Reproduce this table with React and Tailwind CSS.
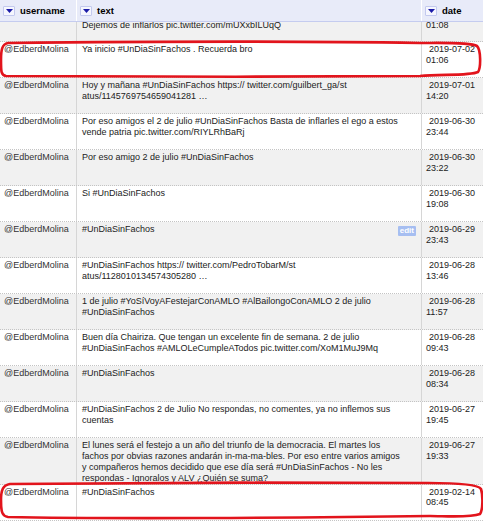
import React from "react";

const rows = [
  { lines: ["Dejemos de inflarlos pic.twitter.com/mUXxbILUqQ"], time: "01:08", partial: true },
  { lines: ["Ya inicio #UnDiaSinFachos . Recuerda bro"], date: "2019-07-02", time: "01:06" },
  {
    lines: ["Hoy y mañana #UnDiaSinFachos https:// twitter.com/guilbert_ga/st", "atus/1145769754659041281 …"],
    date: "2019-07-01",
    time: "14:20",
  },
  {
    lines: [
      "Por eso amigos el 2 de julio #UnDiaSinFachos Basta de inflarles el ego a estos",
      "vende patria pic.twitter.com/RIYLRhBaRj",
    ],
    date: "2019-06-30",
    time: "23:44",
  },
  { lines: ["Por eso amigo 2 de julio #UnDiaSinFachos"], date: "2019-06-30", time: "23:22" },
  { lines: ["Si #UnDiaSinFachos"], date: "2019-06-30", time: "19:08" },
  { lines: ["#UnDiaSinFachos"], date: "2019-06-29", time: "23:43", edit: true },
  {
    lines: ["#UnDiaSinFachos https:// twitter.com/PedroTobarM/st", "atus/1128010134574305280 …"],
    date: "2019-06-28",
    time: "13:46",
  },
  {
    lines: ["1 de julio #YoSíVoyAFestejarConAMLO #AlBailongoConAMLO 2 de julio", "#UnDiaSinFachos"],
    date: "2019-06-28",
    time: "11:57",
  },
  {
    lines: [
      "Buen día Chairiza. Que tengan un excelente fin de semana. 2 de julio",
      "#UnDiaSinFachos #AMLOLeCumpleATodos pic.twitter.com/XoM1MuJ9Mq",
    ],
    date: "2019-06-28",
    time: "09:43",
  },
  { lines: ["#UnDiaSinFachos"], date: "2019-06-28", time: "08:34" },
  {
    lines: ["#UnDiaSinFachos 2 de Julio No respondas, no comentes, ya no inflemos sus", "cuentas"],
    date: "2019-06-27",
    time: "19:45",
  },
  {
    lines: [
      "El lunes será el festejo a un año del triunfo de la democracia. El martes los",
      "fachos por obvias razones andarán in-ma-ma-bles. Por eso entre varios amigos",
      "y compañeros hemos decidido que ese día será #UnDiaSinFachos - No les",
      "respondas - Ignoralos y ALV ¿Quién se suma?",
    ],
    date: "2019-06-27",
    time: "19:33",
  },
  { lines: ["#UnDiaSinFachos"], date: "2019-02-14", time: "08:45" },
];

function SortIcon() {
  return (
    <span className="flex h-[10px] w-[12px] items-center justify-center rounded-[1px] border border-[#c3c9ee] bg-[#f5f6fe]">
      <svg width="7" height="4" viewBox="0 0 7 4">
        <path d="M0 0 L7 0 L3.5 4 Z" fill="#1b1ba8" />
      </svg>
    </span>
  );
}

function HeaderCell({ label, last }) {
  return (
    <div className={`flex items-center gap-[5px] pl-[3px] ${last ? "" : "border-r border-white"}`}>
      <SortIcon />
      <span className="text-[9.5px] font-bold leading-[12px] text-black">{label}</span>
    </div>
  );
}

function Row({ row, idx }) {
  const gray = idx % 2 === 0;
  const pad = row.partial ? "mt-[-2.2px]" : "pt-[2px]";
  return (
    <div
      className={`grid grid-cols-[77px_345px_61px] overflow-hidden border-b border-dotted border-[#c4c4c4] ${
        gray ? "bg-[#f1f1f1]" : "bg-white"
      } ${row.partial ? "h-[20.4px]" : "min-h-[36px]"}`}
    >
      <div className={`border-r border-[#d6d6d6] pl-[4px] text-[#333] ${pad}`}>
        {row.partial ? "" : "@EdberdMolina"}
      </div>
      <div className={`relative border-r border-[#d6d6d6] pl-[5px] ${pad}`}>
        {row.lines.map((line, i) => (
          <div key={i} className="whitespace-nowrap">
            {line}
          </div>
        ))}
        {row.edit ? (
          <span className="absolute right-[5px] top-[4px] rounded-[1px] bg-[#a6bef1] px-[2px] text-[8px] font-bold leading-[10px] text-white">
            edit
          </span>
        ) : null}
      </div>
      <div className={`pl-[4px] ${pad}`}>
        {row.date ? <div className="pl-[3px]">{row.date}</div> : null}
        <div>{row.time}</div>
      </div>
    </div>
  );
}

export default function App() {
  return (
    <div className="relative h-[521px] w-[483px] overflow-hidden bg-white font-['Liberation_Sans',Arial,sans-serif] text-[9px] leading-[10.8px] text-[#222]">
      <div className="grid h-[22px] grid-cols-[77px_345px_61px] border-b border-[#c5ccef] bg-[#e8ebf9]">
        <HeaderCell label="username" />
        <HeaderCell label="text" />
        <HeaderCell label="date" last />
      </div>
      <div className="h-[499px] overflow-hidden">
        {rows.map((row, idx) => (
          <Row key={idx} row={row} idx={idx} />
        ))}
      </div>
      <svg className="pointer-events-none absolute inset-0" width="483" height="521" viewBox="0 0 483 521">
        <path
          d="M 8 43 C 100 42, 300 41, 420 43 C 440 43, 470 42, 477 46 C 481 50, 481 68, 478 72 C 470 76, 440 74, 420 76 C 300 77, 100 77, 6 76 C 1 75, 1 72, 1 60 C 1 50, 2 44, 8 43 Z"
          fill="none"
          stroke="#e2141c"
          strokeWidth="2.6"
        />
        <path
          d="M 10 484 C 120 483, 300 482, 428 483 C 455 483, 478 484, 481 489 C 483 495, 483 510, 480 514 C 470 518, 445 516, 430 516 C 300 518, 100 519, 8 517 C 2 516, 1 512, 1 500 C 1 490, 3 485, 10 484 Z"
          fill="none"
          stroke="#e2141c"
          strokeWidth="2.6"
        />
      </svg>
    </div>
  );
}
